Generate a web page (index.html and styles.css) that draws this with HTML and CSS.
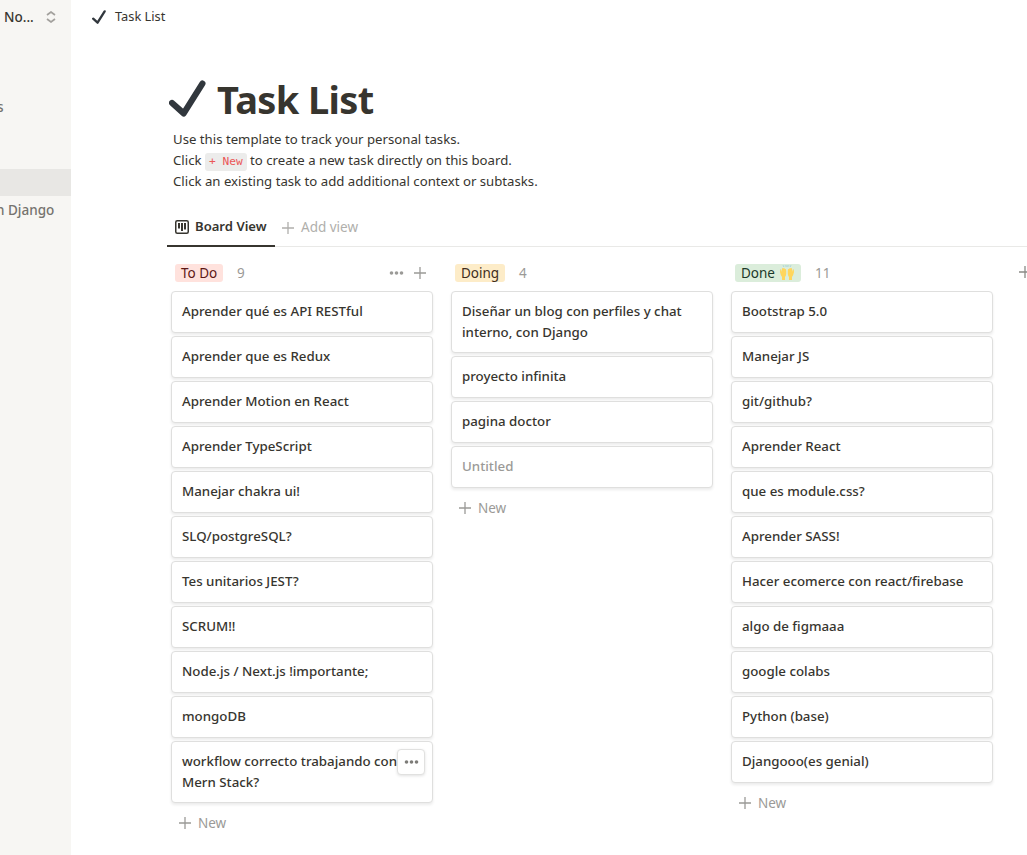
FILE: index.html
```html
<!DOCTYPE html>
<html lang="es">
<head>
<meta charset="utf-8">
<title>Task List</title>
<link rel="stylesheet" href="styles.css">
</head>
<body>
<svg width="0" height="0" class="defs">
  <symbol id="check" viewBox="0 0 36 36"><path d="M3 22.300L14.300 32.500L32.500 3.500" fill="none" stroke="#31373d" stroke-width="6" stroke-linecap="round" stroke-linejoin="round"/></symbol>
  <symbol id="plus" viewBox="0 0 12 12"><path d="M6 0V12M0 6H12" fill="none" stroke="currentColor" stroke-width="1.300"/></symbol>
  <symbol id="dots" viewBox="0 0 14 4"><circle cx="2" cy="2" r="1.800"/><circle cx="7" cy="2" r="1.800"/><circle cx="12" cy="2" r="1.800"/></symbol>
</svg>
<div class="app">
  <aside class="sidebar">
    <div class="workspace"><span>No...</span><svg class="chevrons" viewBox="0 0 10 12"><path d="M1 4L5 1L9 4M1 8L5 11L9 8" fill="none" stroke="#a3a19d" stroke-width="1.700"/></svg></div>
    <div class="side-item side-first">s</div>
    <div class="side-selected"></div>
    <div class="side-item side-page">n Django</div>
  </aside>
  <main class="main">
    <header class="topbar"><svg class="check-small"><use href="#check"/></svg><span>Task List</span></header>
    <div class="heading"><svg class="check-large"><use href="#check"/></svg><h1>Task List</h1></div>
    <div class="description">
      <p>Use this template to track your personal tasks.</p>
      <p>Click <code>+ New</code> to create a new task directly on this board.</p>
      <p>Click an existing task to add additional context or subtasks.</p>
    </div>
    <nav class="tabs">
      <div class="tab active"><svg class="board-icon" viewBox="0 0 14 14"><rect x=".75" y=".75" width="12.500" height="12.500" rx="1.500" fill="none" stroke="#37352f" stroke-width="1.500"/><path d="M4 3V8.500M7 3V11M10 3V9.500" stroke="#37352f" stroke-width="2"/></svg><span>Board View</span></div>
      <div class="tab add"><svg class="plus"><use href="#plus"/></svg><span>Add view</span></div>
    </nav>
    <div class="board">
      <section class="column">
        <div class="col-head"><span class="tag red">To Do</span><span class="count">9</span><span class="actions"><svg class="dots"><use href="#dots"/></svg><svg class="plus"><use href="#plus"/></svg></span></div>
        <div class="card">Aprender qué es API RESTful</div>
        <div class="card">Aprender que es Redux</div>
        <div class="card">Aprender Motion en React</div>
        <div class="card">Aprender TypeScript</div>
        <div class="card">Manejar chakra ui!</div>
        <div class="card">SLQ/postgreSQL?</div>
        <div class="card">Tes unitarios JEST?</div>
        <div class="card">SCRUM!!</div>
        <div class="card">Node.js / Next.js !importante;</div>
        <div class="card">mongoDB</div>
        <div class="card tall">workflow correcto trabajando con<br>Mern Stack?<span class="more"><svg class="dots"><use href="#dots"/></svg></span></div>
        <div class="new"><svg class="plus"><use href="#plus"/></svg><span>New</span></div>
      </section>
      <section class="column">
        <div class="col-head"><span class="tag yellow">Doing</span><span class="count">4</span></div>
        <div class="card tall">Diseñar un blog con perfiles y chat<br>interno, con Django</div>
        <div class="card">proyecto infinita</div>
        <div class="card">pagina doctor</div>
        <div class="card untitled">Untitled</div>
        <div class="new"><svg class="plus"><use href="#plus"/></svg><span>New</span></div>
      </section>
      <section class="column">
        <div class="col-head"><span class="tag green">Done <svg class="hands" viewBox="0 0 16 16"><g fill="#ffd65c"><path id="hand" d="M1.200 4.500Q2 3.800 2.400 5L3 7L3 3.500Q3.700 2.300 4.300 3.500L4.700 3Q5.500 2.500 5.800 4L6.500 4Q7.200 4.200 7.200 6L7.200 9Q7 11 6 12L6 15H3V12Q1.500 10 1 7Z"/><use href="#hand" transform="translate(16 0) scale(-1 1)"/></g><path d="M4 .2L5 2M8 0V2M12 .2L11 2M6.200 .3L6.700 1.500M9.800 .3L9.300 1.500" stroke="#9ccbd6" stroke-width=".8"/></svg></span><span class="count">11</span></div>
        <div class="card">Bootstrap 5.0</div>
        <div class="card">Manejar JS</div>
        <div class="card">git/github?</div>
        <div class="card">Aprender React</div>
        <div class="card">que es module.css?</div>
        <div class="card">Aprender SASS!</div>
        <div class="card">Hacer ecomerce con react/firebase</div>
        <div class="card">algo de figmaaa</div>
        <div class="card">google colabs</div>
        <div class="card">Python (base)</div>
        <div class="card">Djangooo(es genial)</div>
        <div class="new"><svg class="plus"><use href="#plus"/></svg><span>New</span></div>
      </section>
      <div class="next-column"><svg class="plus"><use href="#plus"/></svg></div>
    </div>
  </main>
</div>
</body>
</html>
```
FILE: styles.css
```css
* { box-sizing: border-box; }
body { margin: 0; background: #fff; color: #37352f; font: 13.5px/21px "Noto Sans", "Open Sans", sans-serif; overflow: hidden; }
.defs { display: block; position: absolute; }
svg { display: block; flex: none; }
.app { display: flex; width: 1027px; height: 855px; overflow: hidden; }
.sidebar { width: 71px; flex: none; background: #f7f6f3; white-space: nowrap; }
.workspace { display: flex; align-items: center; height: 34px; padding-left: 4px; font-weight: 500; }
.workspace span { width: 42px; }
.chevrons { width: 10px; height: 12px; }
.side-item { height: 27px; line-height: 27px; color: #75736e; font-weight: 500; }
.side-first { margin: 60px 0 48px -3px; }
.side-selected { height: 27px; background: #e8e7e4; }
.side-page { margin-left: -4px; margin-top: 1px; }
.main { flex: none; width: 956px; white-space: nowrap; }
.topbar { display: flex; align-items: center; height: 33px; padding-left: 21px; gap: 9px; font-size: 12.8px; }
.check-small { width: 14px; height: 14px; }
.heading { display: flex; padding: 46px 0 0 98px; height: 94px; gap: 11px; }
.check-large { width: 37px; height: 37px; margin-top: 1px; }
h1 { margin: -4px 0 0; font-size: 38px; line-height: 48px; font-weight: 700; letter-spacing: -.65px; }
.description { height: 65px; margin: 2px 0 0 102px; font-size: 13.2px; }
.description p { margin: 0; height: 21px; }
code { display: inline-block; height: 18px; line-height: 18px; padding: 0 4px; border-radius: 3px; background: #ececeb; color: #eb5757; font: 11.200px/18px "DejaVu Sans Mono", monospace; }
.tabs { display: flex; height: 40px; margin: 13px 0 0 96px; border-bottom: 1px solid #e9e9e7; }
.tab { display: flex; align-items: center; height: 40px; padding-top: 1px; }
.active { width: 108px; padding-left: 8px; gap: 6px; font-weight: 600; font-size: 13.1px; border-bottom: 2px solid #37352f; }
.board-icon { width: 14px; height: 14px; }
.add { padding-left: 7px; gap: 7px; color: #b0afac; }
.plus { width: 12px; height: 12px; }
.board { display: flex; gap: 18px; padding: 16px 0 0 100px; }
.column { display: flex; flex-direction: column; flex: none; width: 262px; gap: 3px; }
.col-head { display: flex; align-items: center; height: 20px; margin-bottom: 5px; padding: 0 7px 0 4px; }
.tag { display: flex; align-items: center; height: 18px; padding: 0 6px; border-radius: 3px; font-size: 13.5px; white-space: pre; }
.red { background: #ffe2dd; color: #5d1715; width: 48px; }
.yellow { background: #fdecc8; color: #402c1b; width: 50px; }
.green { background: #dbeddb; color: #1c3829; width: 66px; }
.hands { width: 16px; height: 16px; }
.count { margin-left: 14px; color: #9b9a97; }
.actions { display: flex; align-items: center; gap: 10px; margin-left: auto; color: #9b9a97; fill: #9b9a97; }
.dots { width: 15px; height: 4px; }
.card { position: relative; height: 42px; padding: 9px 10px; border: 1px solid #dfdfde; border-radius: 4px; box-shadow: 0 2px 3px rgba(15,15,15,.08); font-size: 13.3px; font-weight: 500; background: #fff; }
.tall { height: 62px; }
.untitled { color: #9b9a97; }
.more { position: absolute; right: 7px; top: 7px; width: 28px; height: 26px; display: flex; align-items: center; justify-content: center; background: #fff; border: 1px solid #e1e1e0; border-radius: 4px; box-shadow: 0 1px 3px rgba(15,15,15,.12); fill: #7d7c78; }
.new { display: flex; align-items: center; height: 34px; padding-left: 8px; gap: 7px; color: #9b9a97; }
.next-column { width: 12px; padding-top: 3px; margin-left: 8px; color: #8b8a87; }
```
